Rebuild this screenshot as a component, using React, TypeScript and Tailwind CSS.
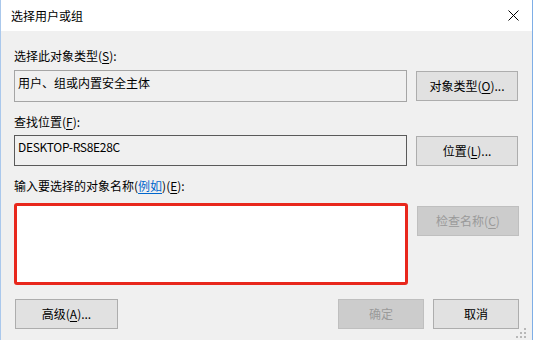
import React from "react";
import clsx from "clsx";

const FONT = "'Noto Sans CJK SC','Noto Sans',sans-serif";

// mnemonic letter, underlined like Win32 access keys
const Key: React.FC<{ children: React.ReactNode }> = ({ children }) => (
  <span className="underline decoration-1 underline-offset-[2px]">{children}</span>
);

interface DlgButtonProps {
  children: React.ReactNode;
  disabled?: boolean;
  className?: string;
}

const DlgButton: React.FC<DlgButtonProps> = ({ children, disabled, className }) => (
  <button
    type="button"
    className={clsx(
      "flex h-[30px] shrink-0 items-center justify-center border text-[12px] leading-[16px]",
      disabled
        ? "border-[#bfbfbf] bg-[#cccccc] text-[#9a9a9a]"
        : "border-[#adadad] bg-[#e1e1e1] text-black",
      className
    )}
  >
    {children}
  </button>
);

const CloseIcon = () => (
  <svg width="11" height="11" viewBox="0 0 11 11" className="block">
    <path d="M0.5 0.5 L10.5 10.5 M10.5 0.5 L0.5 10.5" stroke="#000" strokeWidth="1" fill="none" />
  </svg>
);

const Grip = () => (
  <svg width="12" height="12" viewBox="0 0 12 12" className="absolute right-[5px] bottom-[1px]">
    {[
      [9, 1],
      [9, 5],
      [5, 5],
      [9, 9],
      [5, 9],
      [1, 9],
    ].map(([x, y], i) => (
      <rect key={i} x={x} y={y} width="2" height="2" fill="#b8b8b8" />
    ))}
  </svg>
);

export default function App() {
  return (
    <div className="flex h-[340px] w-[536px] bg-white" style={{ fontFamily: FONT }}>
      <div className="relative flex h-full w-[533px] flex-col border-r border-l border-r-[#7eaee6] border-l-[#aac8ec]">
        {/* title bar */}
        <div className="flex h-[31px] shrink-0 items-center justify-between bg-white pr-[13px] pl-[10px]">
          <span className="text-[12px] leading-[16px] text-black">选择用户或组</span>
          <CloseIcon />
        </div>

        {/* body */}
        <div className="flex flex-1 flex-col bg-[#f0f0f0] pr-[13px] pl-[13px] text-[12px] leading-[16px] text-black">
          <div className="mt-[17px]">
            选择此对象类型(<Key>S</Key>):
          </div>
          <div className="mt-[6px] flex items-center gap-[9px]">
            <div className="h-[32px] w-[393px] border border-[#a5a5a5] pt-[4px] pl-[3px]">
              用户、组或内置安全主体
            </div>
            <DlgButton className="w-[102px]">
              对象类型(<Key>O</Key>)...
            </DlgButton>
          </div>

          <div className="mt-[12px]">
            查找位置(<Key>F</Key>):
          </div>
          <div className="mt-[5px] flex items-center gap-[9px]">
            <div className="h-[31px] w-[393px] border border-[#5a5a5a] pt-[3px] pl-[3px] tracking-[-0.3px]">
              DESKTOP-RS8E28C
            </div>
            <DlgButton className="w-[102px]">
              位置(<Key>L</Key>)...
            </DlgButton>
          </div>

          <div className="mt-[12px]">
            输入要选择的对象名称(
            <span className="text-[#0066cc] underline decoration-1 underline-offset-[2px]">例如</span>
            )(<Key>E</Key>):
          </div>
          <div className="mt-[9px] flex items-start gap-[9px]">
            <div className="h-[82px] w-[394px] rounded-[3px] border-[3px] border-[#e8271c] bg-white" />
            <DlgButton disabled className="mt-[3px] w-[102px]">
              检查名称(<Key>C</Key>)
            </DlgButton>
          </div>

          <div className="mt-[14px] flex items-center">
            <DlgButton className="ml-[1px] w-[103px]">
              高级(<Key>A</Key>)...
            </DlgButton>
            <div className="flex-1" />
            <DlgButton disabled className="w-[86px]">
              确定
            </DlgButton>
            <DlgButton className="ml-[9px] w-[86px]">取消</DlgButton>
          </div>
        </div>
        <Grip />
      </div>
    </div>
  );
}
